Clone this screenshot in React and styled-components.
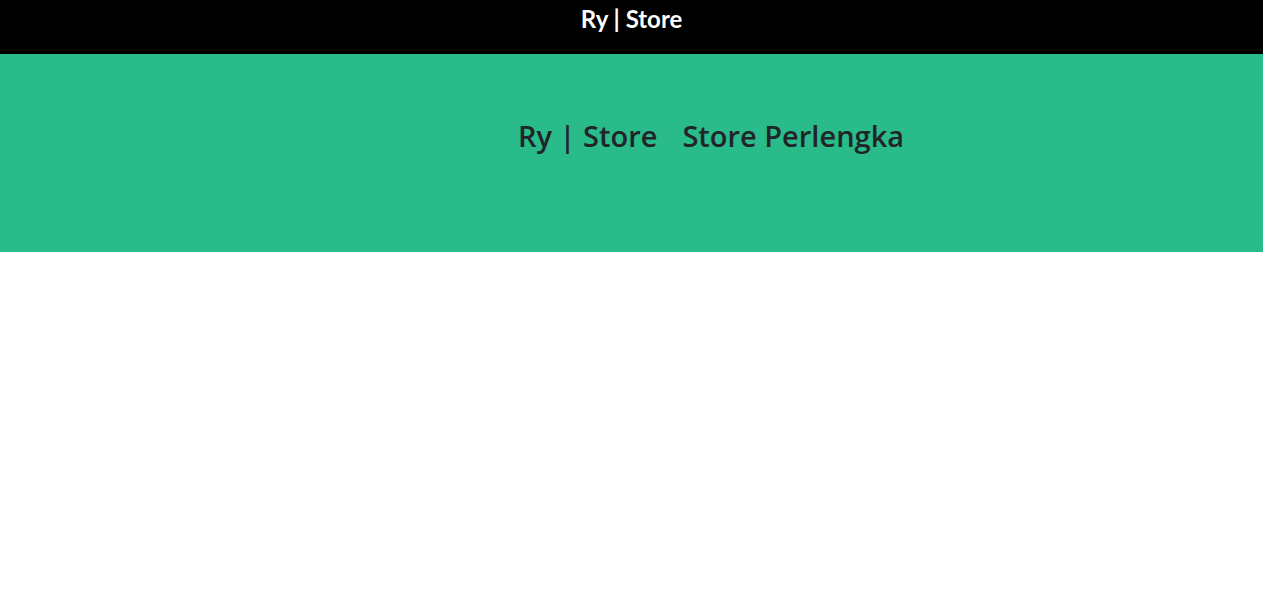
import React from 'react';
import styled, { createGlobalStyle } from 'styled-components';

const GlobalStyle = createGlobalStyle`
  html, body {
    margin: 0;
    padding: 0;
    background: #ffffff;
  }
  body {
    font-family: "Open Sans", "Liberation Sans", sans-serif;
  }
`;

const Page = styled.div`
  width: calc(100% - 2px);
  min-height: 601px;
`;

const TopBar = styled.nav`
  height: 54px;
  background-color: #000000;
  display: flex;
  justify-content: center;
  align-items: flex-start;
`;

const Brand = styled.span`
  font-family: "Lato", "Open Sans", sans-serif;
  font-weight: 700;
  font-size: 24px;
  line-height: 38px;
  color: #ffffff;
`;

const Hero = styled.header`
  height: 198px;
  background-color: #2abb8a;
  display: flex;
  padding-top: 62px;
  box-sizing: border-box;
`;

// text runs past the box edge and gets clipped, like in the original
const Ticker = styled.div`
  margin-left: 518px;
  width: 387px;
  overflow: hidden;
  white-space: nowrap;
  display: flex;
  gap: 25px;
  height: 48px;
`;

const HeroTitle = styled.h1`
  margin: 0;
  font-family: "Open Sans", sans-serif;
  font-weight: 600;
  font-size: 29px;
  line-height: 40px;
  color: #212529;
`;

export default function App() {
  return (
    <Page>
      <GlobalStyle />
      <TopBar>
        <Brand>Ry | Store</Brand>
      </TopBar>
      <Hero>
        <Ticker>
          <HeroTitle>Ry | Store</HeroTitle>
          <HeroTitle>Store Perlengkapan</HeroTitle>
        </Ticker>
      </Hero>
    </Page>
  );
}
